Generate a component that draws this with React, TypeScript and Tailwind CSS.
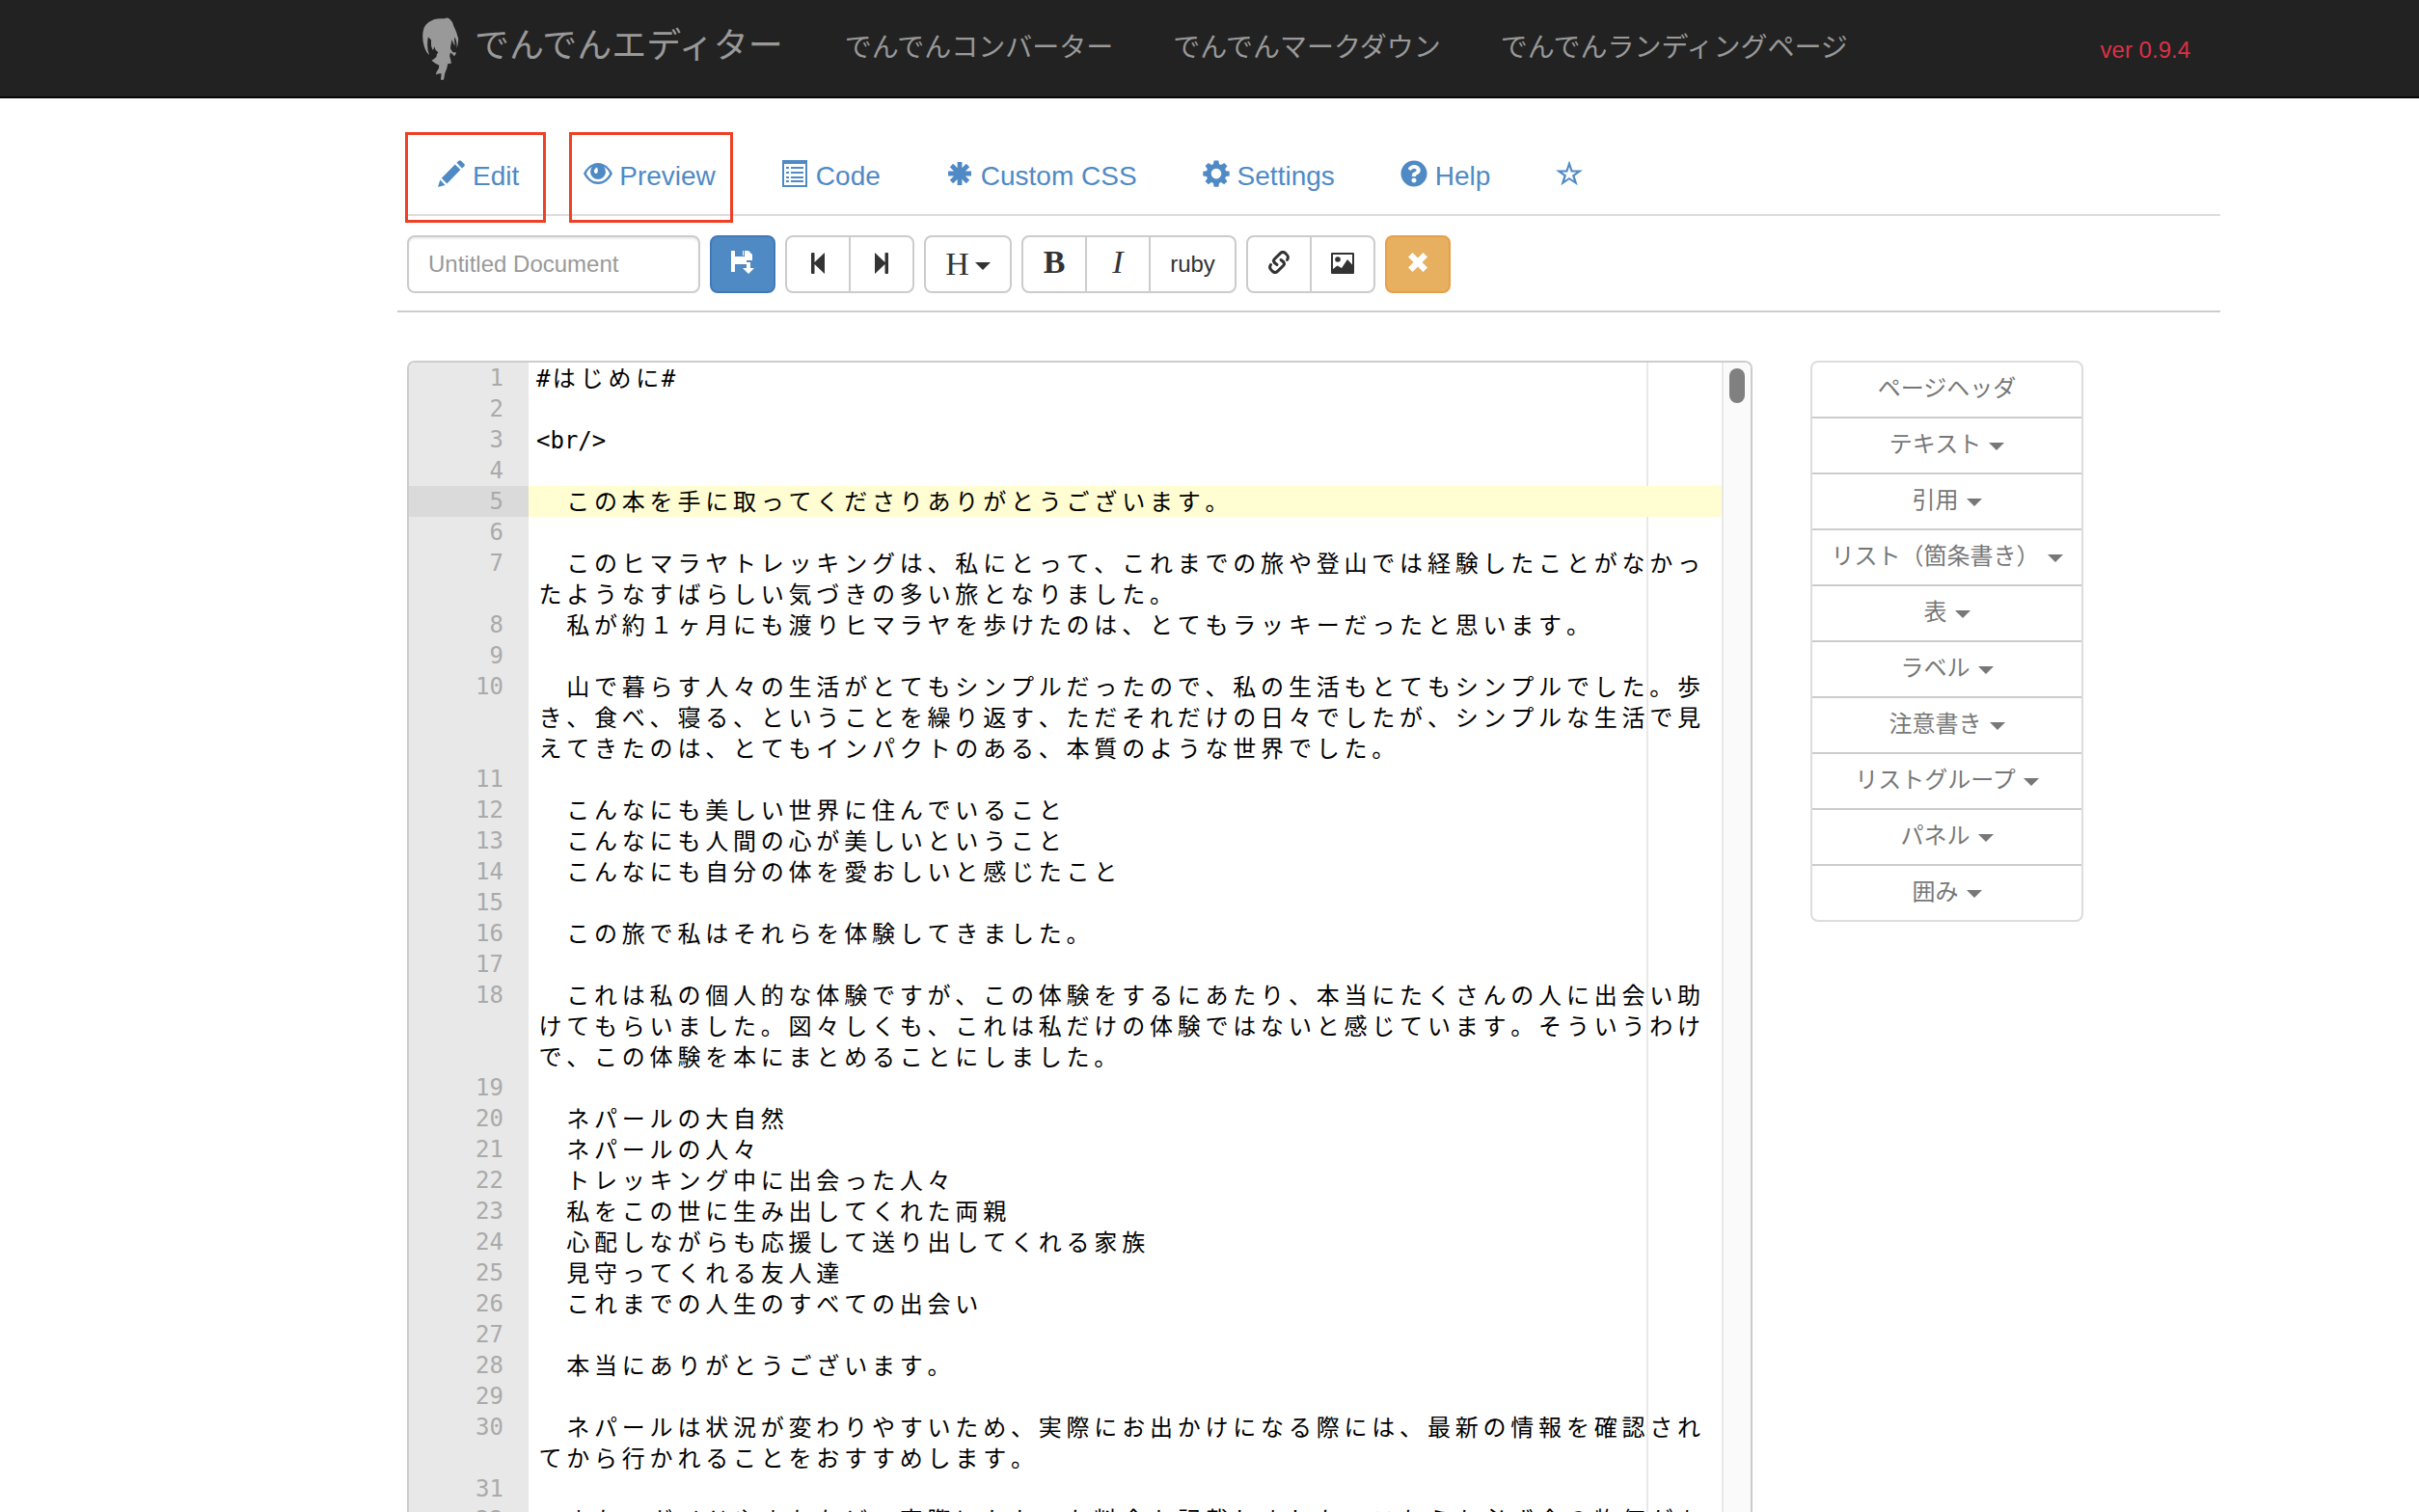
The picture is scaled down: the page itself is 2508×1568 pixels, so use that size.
import React from "react";
import { FaQuestionCircle } from "react-icons/fa";

const SANS = "font-['Liberation_Sans','Noto_Sans_CJK_JP',sans-serif]";
const SERIF = "font-['Liberation_Serif',serif]";
const MONO = "font-['DejaVu_Sans_Mono','Noto_Sans_CJK_JP',monospace]";

function Mascot() {
  return (
    <svg viewBox="27 26 114 197" className="h-[65px] w-[38px] shrink-0" fill="currentColor" aria-hidden="true">
      <path d="M62 33Q75 28 97 30Q103 25 112 31Q121 38 124 52Q134 72 139 92Q140 108 134 124Q136 100 127 88Q126 102 129 116Q122 108 119 96Q116 110 114 124L122 136L133 137Q130 145 126 148L121 142L114 137L112 148Q116 160 117 171Q110 172 106 172Q104 188 97 202L93 222L84 222L86 203Q78 202 68 206Q70 196 76 190Q80 182 78 176Q66 172 55 162Q64 156 70 150Q71 140 76 136Q66 130 63 118Q61 134 57 125Q52 116 54 98Q50 92 44 88Q42 100 42 112Q42 130 48 144Q38 138 32 118Q25 96 28 72Q30 46 62 33Z" />
    </svg>
  );
}

function Svg({ w, h, className = "", children }: { w: number; h: number; className?: string; children: React.ReactNode }) {
  return (
    <svg
      width={w}
      height={h}
      viewBox={`0 0 ${w} ${h}`}
      fill="currentColor"
      className={`shrink-0 ${className}`}
      aria-hidden="true"
    >
      {children}
    </svg>
  );
}

const PencilIcon = () => (
  <Svg w={28} h={28}>
    <path d="M0 28L2.3 20.5L7.6 26ZM3.8 18.8L17.8 4.4L23.4 10L9.4 24.4ZM19.4 2.8L21.6 .7Q22.8 -.4 24 .7L27.3 4Q28.4 5.2 27.3 6.4L25 8.5Z" />
  </Svg>
);
const EyeIcon = () => (
  <Svg w={30} h={28} className="-mx-px">
    <path
      fillRule="evenodd"
      d="M15 3C22 3 27 8 30 14C27 20 22 25 15 25S3 20 0 14C3 8 8 3 15 3ZM9 6.8C6.2 8.4 4.2 11 2.8 14C5.5 19 9.5 22.5 15 22.5S24.5 19 27.2 14C25.8 11 23.8 8.4 21 6.8A8 8 0 1 1 9 6.8ZM14 7.5Q10.5 9 11 12.5Q12.5 15 14.5 13Q15.5 10 14 7.5Z"
    />
  </Svg>
);
const ListIcon = () => (
  <Svg w={28} h={28}>
    <path
      fillRule="evenodd"
      d="M1 0H27V28H1ZM3 4V26H25V4ZM5 7H8V9H5ZM10 7H23V9H10ZM5 12H8V14H5ZM10 12H23V14H10ZM5 17H8V19H5ZM10 17H23V19H10ZM5 21H8V23H5ZM10 21H23V23H10Z"
    />
  </Svg>
);
const AsteriskIcon = () => (
  <Svg w={28} h={28}>
    <path d="M14 2V26M2 14H26M5.5 5.5L22.5 22.5M22.5 5.5L5.5 22.5" stroke="currentColor" strokeWidth="4.8" />
  </Svg>
);
const CogIcon = () => (
  <Svg w={28} h={28}>
    <path
      fillRule="evenodd"
      d="M11.6 .5H16.4L17 4.3L19 5.1L22.2 2.9L25.4 6.1L23.2 9.2L24 11.2L27.7 11.8V16.4L24 17L23.2 19L25.4 22.1L22.2 25.3L19 23.1L17 23.9L16.4 27.7H11.6L11 23.9L9 23.1L5.8 25.3L2.6 22.1L4.8 19L4 17L.3 16.4V11.8L4 11.2L4.8 9.2L2.6 6.1L5.8 2.9L9 5.1L11 4.3ZM14 8.8A5.3 5.3 0 1 0 14 19.4A5.3 5.3 0 1 0 14 8.8Z"
    />
  </Svg>
);
const StarIcon = () => (
  <Svg w={28} h={28}>
    <path
      fillRule="evenodd"
      d="M14 .5L17.4 10.5H28L19.6 16.5L22.7 26.3L14 20.3L5.3 26.3L8.4 16.5L0 10.5H10.6ZM14 7L12.2 12.6H6.5L11 15.8L9.3 21.3L14 18L18.7 21.3L17 15.8L21.5 12.6H15.8Z"
    />
  </Svg>
);
const SaveIcon = () => (
  <Svg w={24} h={24}>
    <path d="M0 0H4V6H14V0H18L22 4V10H16V14H4V22H0ZM12 0H13V5H12ZM16 12H20V18H24L18 24L12 18H16Z" />
  </Svg>
);
const StepBackIcon = () => (
  <Svg w={14} h={22}>
    <path d="M0 1Q0 0 1 0H2.5Q3.5 0 3.5 1V10L14 0V22L3.5 12V21Q3.5 22 2.5 22H1Q0 22 0 21Z" />
  </Svg>
);
const StepForwardIcon = () => (
  <Svg w={14} h={22}>
    <path d="M14 1Q14 0 13 0H11.5Q10.5 0 10.5 1V10L0 0V22L10.5 12V21Q10.5 22 11.5 22H13Q14 22 14 21Z" />
  </Svg>
);
const LinkIcon = () => (
  <Svg w={22} h={24}>
    <g fill="none" stroke="currentColor" strokeWidth="3" strokeLinecap="round">
      <path d="M6.5 12.5C5 11 5.5 9.5 6.5 8.5L12.5 2.7C14 1.2 16 1.2 17.5 2.5L19 4C20.8 5.7 20.8 7.5 19.5 9.5" />
      <path d="M15.5 11.5C17 13 16.5 14.5 15.5 15.5L9.5 21.3C8 22.8 6 22.8 4.5 21.5L3 20C1.2 18.3 1.2 16.5 2.5 14.5" />
      <path d="M6.5 12.5L9 14.5M15.5 11.5L13 9.5" />
    </g>
  </Svg>
);
const PictureIcon = () => (
  <Svg w={24} h={22}>
    <path
      fillRule="evenodd"
      d="M1 0H23Q24 0 24 1V21Q24 22 23 22H1Q0 22 0 21V1Q0 0 1 0ZM2 2V17L6.5 13.5L11 16L17 7L22 12.5V2Z"
    />
    <circle cx="7" cy="7" r="2.8" />
  </Svg>
);
const CloseIcon = () => (
  <Svg w={20} h={20}>
    <path d="M4.5 0L10 5.5L15.5 0L20 4.5L14.5 10L20 15.5L15.5 20L10 14.5L4.5 20L0 15.5L5.5 10L0 4.5Z" />
  </Svg>
);
const Caret = () => (
  <Svg w={16} h={8}>
    <path d="M0 0H16L8 8Z" />
  </Svg>
);

const tabs = [
  { label: "Edit", icon: <PencilIcon />, frame: "left-0 right-[6px]" },
  { label: "Preview", icon: <EyeIcon />, frame: "left-[18px] right-4" },
  { label: "Code", icon: <ListIcon /> },
  { label: "Custom CSS", icon: <AsteriskIcon /> },
  { label: "Settings", icon: <CogIcon /> },
  { label: "Help", icon: <FaQuestionCircle size={28} aria-hidden="true" /> },
  { label: "", icon: <StarIcon /> },
];

const lines = [
  "#はじめに#",
  "",
  "<br/>",
  "",
  "　この本を手に取ってくださりありがとうございます。",
  "",
  "　このヒマラヤトレッキングは、私にとって、これまでの旅や登山では経験したことがなかったようなすばらしい気づきの多い旅となりました。",
  "　私が約１ヶ月にも渡りヒマラヤを歩けたのは、とてもラッキーだったと思います。",
  "",
  "　山で暮らす人々の生活がとてもシンプルだったので、私の生活もとてもシンプルでした。歩き、食べ、寝る、ということを繰り返す、ただそれだけの日々でしたが、シンプルな生活で見えてきたのは、とてもインパクトのある、本質のような世界でした。",
  "",
  "　こんなにも美しい世界に住んでいること",
  "　こんなにも人間の心が美しいということ",
  "　こんなにも自分の体を愛おしいと感じたこと",
  "",
  "　この旅で私はそれらを体験してきました。",
  "",
  "　これは私の個人的な体験ですが、この体験をするにあたり、本当にたくさんの人に出会い助けてもらいました。図々しくも、これは私だけの体験ではないと感じています。そういうわけで、この体験を本にまとめることにしました。",
  "",
  "　ネパールの大自然",
  "　ネパールの人々",
  "　トレッキング中に出会った人々",
  "　私をこの世に生み出してくれた両親",
  "　心配しながらも応援して送り出してくれる家族",
  "　見守ってくれる友人達",
  "　これまでの人生のすべての出会い",
  "",
  "　本当にありがとうございます。",
  "",
  "　ネパールは状況が変わりやすいため、実際にお出かけになる際には、最新の情報を確認されてから行かれることをおすすめします。",
  "",
  "　また、ガイドやまちなど、実際にかかった料金も記載しました。こちらも必ず今の物価があり",
];
const ACTIVE_LINE = 5;

const snippets = [
  "ページヘッダ",
  "テキスト",
  "引用",
  "リスト（箇条書き）",
  "表",
  "ラベル",
  "注意書き",
  "リストグループ",
  "パネル",
  "囲み",
];

/* Full-width characters take a cell two columns wide, so they align with the monospace grid. */
function CodeText({ text }: { text: string }) {
  return (
    <>
      {text.split(/([^\x00-\x7f])/).map((part, i) =>
        /[^\x00-\x7f]/.test(part) ? (
          <span key={i} className="inline-block w-[1.2em] text-center">
            {part}
          </span>
        ) : (
          part
        ),
      )}
    </>
  );
}

const toolBtn = "flex h-[60px] items-center justify-center border-2 border-[#ccc] bg-white text-[#333]";

export default function App() {
  return (
    <div className={`flex h-screen flex-col overflow-hidden bg-white text-[24px] text-[#333] ${SANS}`}>
      <header className="shrink-0 border-b-2 border-[#080808] bg-[#222] text-[#999]">
        <div className="mx-auto flex h-[100px] w-full max-w-[2340px] items-center pr-[153px] pl-[354px]">
          <a href="#" className="flex items-center gap-4 text-[36px] leading-none">
            <Mascot />
            <span className="pb-1">でんでんエディター</span>
          </a>
          <nav className="ml-16 flex gap-[62px] pb-px text-[28px] leading-none">
            <a href="#">でんでんコンバーター</a>
            <a href="#">でんでんマークダウン</a>
            <a href="#">でんでんランディングページ</a>
          </nav>
          <span className="ml-auto pt-1 text-[#dc3146]">ver 0.9.4</span>
        </div>
      </header>

      <main className="mx-auto flex min-h-0 w-full max-w-[2340px] flex-1 flex-col pr-[122px] pl-[328px]">
        <nav className="mt-[35px] ml-2 flex h-[87px] shrink-0 border-b-2 border-[#ddd] text-[28px] text-[#4f8ac5]">
          {tabs.map((tab, i) => (
            <a
              key={i}
              href="#"
              aria-label={tab.label || "Favorite"}
              className="relative flex h-[86px] items-center gap-2 px-[34px]"
            >
              {tab.icon}
              {tab.label && <span className="pt-[6px]">{tab.label}</span>}
              {tab.frame && <span className={`absolute top-0 -bottom-2 border-[3px] border-[#ee4023] ${tab.frame}`} />}
            </a>
          ))}
        </nav>

        <div className="flex shrink-0 gap-[10px] border-b-2 border-[#ccc] pt-5 pb-[18px] pl-[10px]">
          <input
            aria-label="Document title"
            placeholder="Untitled Document"
            className="h-[60px] w-[304px] rounded-lg border-2 border-[#ccc] px-5 text-[24px] shadow-[inset_0_2px_2px_rgba(0,0,0,0.075)] placeholder:text-[#999]"
          />
          <button
            aria-label="Save"
            className="flex h-[60px] w-[68px] items-center justify-center rounded-lg border-2 border-[#4279b8] bg-[#4f8ac5] pb-1 text-white"
          >
            <SaveIcon />
          </button>
          <div className="flex">
            <button aria-label="Undo" className={`${toolBtn} w-[68px] rounded-l-lg pb-[2px]`}>
              <StepBackIcon />
            </button>
            <button aria-label="Redo" className={`${toolBtn} -ml-[2px] w-[68px] rounded-r-lg pb-[2px]`}>
              <StepForwardIcon />
            </button>
          </div>
          <button aria-label="Heading" className={`${toolBtn} w-[91px] gap-[6px] rounded-lg`}>
            <span className={`${SERIF} text-[34px] leading-none`}>H</span>
            <span className="pt-1">
              <Caret />
            </span>
          </button>
          <div className="flex">
            <button
              aria-label="Bold"
              className={`${toolBtn} w-[68px] rounded-l-lg pb-1 ${SERIF} text-[34px] leading-none font-bold`}
            >
              B
            </button>
            <button
              aria-label="Italic"
              className={`${toolBtn} -ml-[2px] w-[68px] pb-1 ${SERIF} text-[34px] leading-none italic`}
            >
              I
            </button>
            <button className={`${toolBtn} -ml-[2px] w-[91px] rounded-r-lg`}>ruby</button>
          </div>
          <div className="flex">
            <button aria-label="Link" className={`${toolBtn} w-[68px] rounded-l-lg pb-1`}>
              <LinkIcon />
            </button>
            <button aria-label="Image" className={`${toolBtn} -ml-[2px] w-[68px] rounded-r-lg pb-[2px]`}>
              <PictureIcon />
            </button>
          </div>
          <button
            aria-label="Clear"
            className="flex h-[60px] w-[68px] items-center justify-center rounded-lg border-2 border-[#e4a14c] bg-[#e7af60] pb-1 text-white"
          >
            <CloseIcon />
          </button>
        </div>

        <div className="flex min-h-0 flex-1 items-start gap-[60px] pt-[50px] pr-[142px] pl-[10px]">
          <section className="flex h-full min-w-0 flex-1 overflow-hidden rounded-t-lg border-2 border-b-0 border-[#ccc]">
            <div
              className={`relative min-w-0 flex-1 bg-[linear-gradient(to_right,#e8e8e8_124px,transparent_124px)] text-[24px] leading-8 text-black ${MONO}`}
            >
              <div className="absolute inset-y-0 right-[76px] w-[2px] bg-[#e8e8e8]" />
              {lines.map((line, i) => {
                const active = i + 1 === ACTIVE_LINE;
                return (
                  <div key={i} className={`relative flex ${active ? "bg-[#fffdd1]" : ""}`}>
                    <div
                      className={`w-[124px] shrink-0 pr-[26px] text-right text-[#aaa] ${active ? "bg-[#dadada]" : ""}`}
                    >
                      {i + 1}
                    </div>
                    <div className="-mb-px min-w-0 flex-1 pt-px pl-2">
                      <CodeText text={line} />
                    </div>
                  </div>
                );
              })}
            </div>
            <div className="w-[30px] shrink-0 border-l-2 border-[#e8e8e8] bg-[#fafafa] px-[6px] pt-[6px]">
              <div className="h-9 w-4 rounded-full bg-[#808080]" />
            </div>
          </section>

          <aside className="w-[283px] shrink-0 divide-y-2 divide-[#ccc] overflow-hidden rounded-lg border-2 border-[#ddd] text-[#777]">
            {snippets.map((name, i) => (
              <button key={name} className="flex h-[58px] w-full items-center justify-center gap-2 pb-[2px] last:h-14">
                <span>{name}</span>
                {i > 0 && (
                  <span className="pt-1">
                    <Caret />
                  </span>
                )}
              </button>
            ))}
          </aside>
        </div>
      </main>
    </div>
  );
}
